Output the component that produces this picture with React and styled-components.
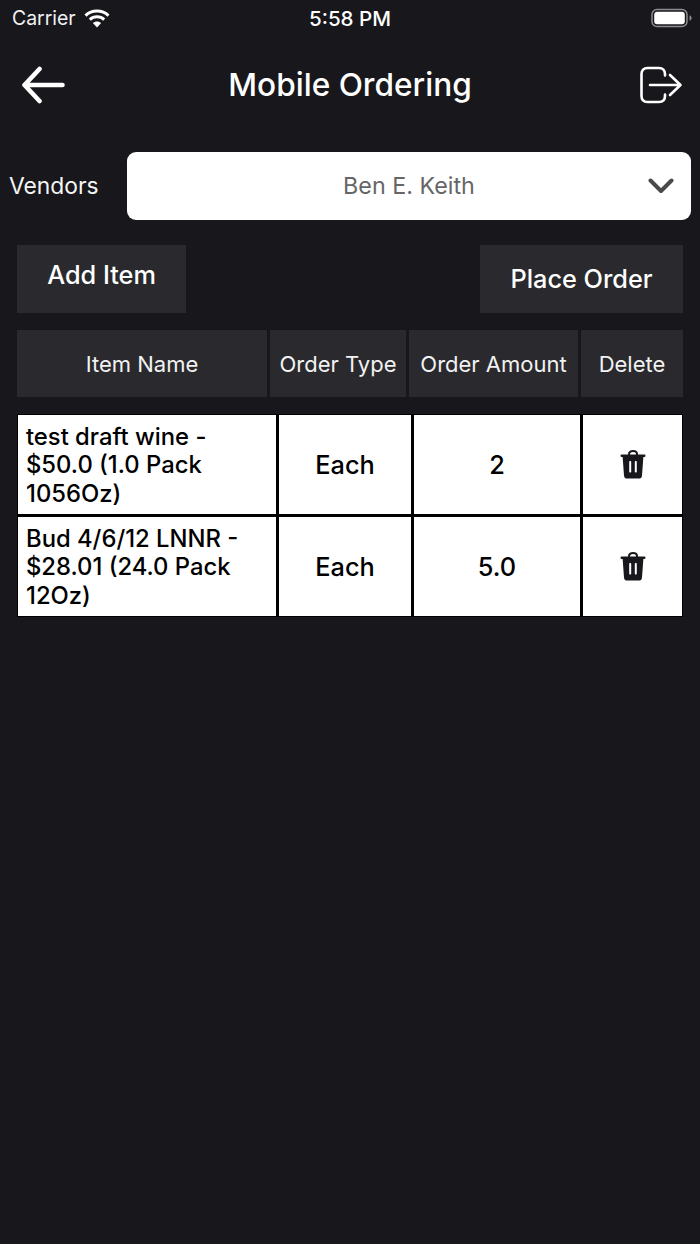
import React from 'react'
import styled, { createGlobalStyle } from 'styled-components'

const rows = [
  { id: 1, name: 'test draft wine - $50.0 (1.0 Pack 1056Oz)', type: 'Each', amount: '2' },
  { id: 2, name: 'Bud 4/6/12 LNNR - $28.01 (24.0 Pack 12Oz)', type: 'Each', amount: '5.0' },
]

const heads = [
  { label: 'Item Name', width: 250 },
  { label: 'Order Type', width: 136 },
  { label: 'Order Amount', width: 169 },
  { label: 'Delete', width: 102 },
]

const WifiIcon = () => (
  <svg width="26" height="20" viewBox="0 0 26 20">
    <path d="M1.5 7.6C7.8 1.6 18.2 1.6 24.5 7.6" fill="none" stroke="#fff" strokeWidth="3" />
    <path d="M5.8 11.6C9.8 7.9 16.2 7.9 20.2 11.6" fill="none" stroke="#fff" strokeWidth="3" />
    <path d="M13 19.4L8.8 15C11.2 12.9 14.8 12.9 17.2 15Z" fill="#fff" />
  </svg>
)

const BatteryIcon = () => (
  <svg width="42" height="20" viewBox="0 0 42 20">
    <rect x="1" y="1.5" width="35" height="17" rx="5" fill="none" stroke="#8c8c8f" strokeWidth="1.5" />
    <rect x="3.2" y="3.7" width="30.6" height="12.6" rx="3" fill="#fff" />
    <path d="M38.5 7.2C40 7.8 40.6 8.8 40.6 10C40.6 11.2 40 12.2 38.5 12.8Z" fill="#8c8c8f" />
  </svg>
)

const BackIcon = () => (
  <svg width="44" height="38" viewBox="0 0 44 38">
    <path d="M41.5 19H3.5M18.5 3L3.5 19L18.5 35" fill="none" stroke="#fff" strokeWidth="4.6" strokeLinecap="round" strokeLinejoin="round" />
  </svg>
)

const LogoutIcon = () => (
  <svg width="43" height="38" viewBox="0 0 43 38">
    <path d="M25 9.5V8C25 4.2 22.8 2 19 2H7.5C3.7 2 1.5 4.2 1.5 8V30C1.5 33.8 3.7 36 7.5 36H19C22.8 36 25 33.8 25 30V28.5" fill="none" stroke="#fff" strokeWidth="2.6" strokeLinecap="round" />
    <path d="M10 19H40M30 9L40.5 19L30 29" fill="none" stroke="#fff" strokeWidth="2.6" strokeLinecap="round" strokeLinejoin="round" />
  </svg>
)

const ChevronIcon = () => (
  <svg width="26" height="16" viewBox="0 0 26 16">
    <path d="M2.5 2.5L13 13L23.5 2.5" fill="none" stroke="#4a4a4a" strokeWidth="4" strokeLinecap="round" strokeLinejoin="round" />
  </svg>
)

const TrashIcon = () => (
  <svg width="26" height="29" viewBox="0 0 26 29">
    <path d="M9 5.5V4.2C9 2.2 10.6 1 13 1C15.4 1 17 2.2 17 4.2V5.5" fill="none" stroke="#18181c" strokeWidth="2" />
    <rect x="0.5" y="4.6" width="25" height="2.4" rx="1.2" fill="#18181c" />
    <path fillRule="evenodd" d="M2.6 6.5H23.4L22 25.4C21.8 27.6 20.6 28.6 18.6 28.6H7.4C5.4 28.6 4.2 27.6 4 25.4ZM10.2 11C9.5 11 9.2 11.5 9.2 12.1V21.4C9.2 22 9.5 22.5 10.2 22.5C10.9 22.5 11.2 22 11.2 21.4V12.1C11.2 11.5 10.9 11 10.2 11ZM15.8 11C15.1 11 14.8 11.5 14.8 12.1V21.4C14.8 22 15.1 22.5 15.8 22.5C16.5 22.5 16.8 22 16.8 21.4V12.1C16.8 11.5 16.5 11 15.8 11Z" fill="#18181c" />
  </svg>
)

export default function App() {
  return (
    <>
      <GlobalStyle />
      <Screen>
        <StatusBar>
          <StatusLeft>
            Carrier
            <WifiIcon />
          </StatusLeft>
          <StatusTime>5:58 PM</StatusTime>
          <StatusRight>
            <BatteryIcon />
          </StatusRight>
        </StatusBar>

        <NavBar>
          <NavButton><BackIcon /></NavButton>
          <Title>Mobile Ordering</Title>
          <NavButton><LogoutIcon /></NavButton>
        </NavBar>

        <VendorRow>
          <VendorLabel>Vendors</VendorLabel>
          <VendorSelect>
            <VendorValue>Ben E. Keith</VendorValue>
            <ChevronSlot><ChevronIcon /></ChevronSlot>
          </VendorSelect>
        </VendorRow>

        <Actions>
          <AddButton>Add Item</AddButton>
          <PlaceButton>Place Order</PlaceButton>
        </Actions>

        <HeaderRow>
          {heads.map((h) => (
            <HeaderCell key={h.label} $width={h.width}>{h.label}</HeaderCell>
          ))}
        </HeaderRow>

        <Table>
          {rows.map((r) => (
            <React.Fragment key={r.id}>
              <NameCell>{r.name}</NameCell>
              <Cell>{r.type}</Cell>
              <Cell>{r.amount}</Cell>
              <Cell><TrashIcon /></Cell>
            </React.Fragment>
          ))}
        </Table>
      </Screen>
    </>
  )
}

const GlobalStyle = createGlobalStyle`
  html, body {
    margin: 0;
    padding: 0;
    background: #18181c;
  }
  * {
    box-sizing: border-box;
  }
`

const Screen = styled.div`
  width: 700px;
  height: 1244px;
  background: #18181c;
  color: #fff;
  font-family: Inter, "Noto Sans", sans-serif;
  overflow: hidden;
`

const StatusBar = styled.div`
  height: 38px;
  padding: 0 7px 2px;
  display: grid;
  grid-template-columns: 1fr auto 1fr;
  align-items: center;
`

const StatusLeft = styled.div`
  display: flex;
  align-items: center;
  gap: 8px;
  padding-left: 5px;
  font-size: 19.4px;
  color: #f2f2f2;
`

const StatusTime = styled.div`
  font-size: 20.6px;
  font-weight: 500;
`

const StatusRight = styled.div`
  display: flex;
  justify-content: flex-end;
`

const NavBar = styled.div`
  height: 40px;
  margin-top: 26px;
  padding: 0 17px;
  display: flex;
  align-items: center;
  justify-content: space-between;
`

const NavButton = styled.div`
  width: 48px;
  margin-top: 2px;
  display: flex;
  align-items: center;
  justify-content: flex-end;
`

const Title = styled.h1`
  margin: 0;
  font-size: 31.6px;
  font-weight: 500;
  color: #fff;
`

const VendorRow = styled.div`
  margin-top: 48px;
  padding: 0 9px;
  display: flex;
  align-items: center;
`

const VendorLabel = styled.div`
  width: 118px;
  padding-bottom: 2px;
  font-size: 22.8px;
  color: #f5f5f5;
`

const VendorSelect = styled.div`
  position: relative;
  width: 564px;
  height: 68px;
  padding-bottom: 2px;
  background: #fff;
  border-radius: 9px;
  display: flex;
  align-items: center;
  justify-content: center;
`

const VendorValue = styled.span`
  font-size: 23.3px;
  color: #666;
`

const ChevronSlot = styled.span`
  position: absolute;
  right: 17px;
  top: 26px;
  display: flex;
`

const Actions = styled.div`
  margin-top: 25px;
  padding: 0 17px;
  display: flex;
  justify-content: space-between;
`

const ActionButton = styled.div`
  height: 68px;
  background: #29292e;
  display: flex;
  justify-content: center;
  font-size: 25.3px;
  font-weight: 500;
  color: #fff;
`

const AddButton = styled(ActionButton)`
  width: 169px;
  padding-top: 14px;
`

const PlaceButton = styled(ActionButton)`
  width: 203px;
  padding-top: 18px;
`

const HeaderRow = styled.div`
  margin-top: 17px;
  padding: 0 17px;
  display: flex;
  gap: 3px;
`

const HeaderCell = styled.div`
  width: ${(p) => p.$width}px;
  height: 67px;
  background: #29292e;
  display: flex;
  align-items: center;
  justify-content: center;
  font-size: 22px;
  color: #f2f2f2;
  white-space: nowrap;
`

const Table = styled.div`
  width: 666px;
  margin: 17px 0 0 17px;
  padding: 1px;
  background: #000;
  display: grid;
  grid-template-columns: 258px 132px 166px 99px;
  grid-auto-rows: 99px;
  gap: 3px;
`

const Cell = styled.div`
  background: #fff;
  color: #000;
  display: flex;
  align-items: center;
  justify-content: center;
  font-size: 25.3px;
  font-weight: 500;
`

const NameCell = styled(Cell)`
  justify-content: flex-start;
  padding: 2px 8px 0;
  font-size: 23.8px;
  line-height: 28.5px;
`
